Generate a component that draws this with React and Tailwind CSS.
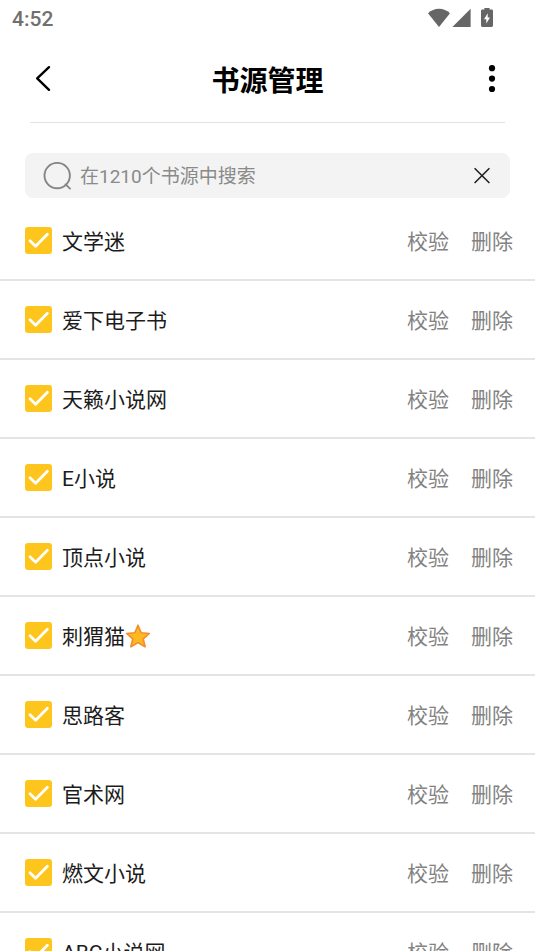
import React, { useState } from 'react';

const SOURCES = [
  { name: '文学迷' },
  { name: '爱下电子书' },
  { name: '天籁小说网' },
  { name: 'E小说' },
  { name: '顶点小说' },
  { name: '刺猬猫', starred: true },
  { name: '思路客' },
  { name: '官术网' },
  { name: '燃文小说' },
  { name: 'ABC小说网' },
];

const StatusBar = () => (
  <div className="flex h-9 shrink-0 items-center justify-between pl-3 pr-[42px] text-[#707070]">
    <span className="pt-0.5 text-[21px] font-medium leading-6">4:52</span>
    <div className="flex items-center text-[#666666]">
      <svg className="h-5 w-[22px]" viewBox="0 0 22 20" fill="currentColor" aria-hidden="true">
        <path d="M0 5.2C3 2.4 6.8.8 11 .8s8 1.6 11 4.4L11 19z" />
      </svg>
      <svg className="ml-0.5 h-5 w-[19px]" viewBox="0 0 19 20" fill="currentColor" aria-hidden="true">
        <path d="M18.6.8V19H.4z" />
      </svg>
      <svg className="ml-2.5 h-5 w-3" viewBox="0 0 12 20" fill="currentColor" aria-hidden="true">
        <path
          fillRule="evenodd"
          d="M3.4 1.4V.2c0-.3.3-.6.6-.6h4c.3 0 .6.3.6.6v1.2h2c.8 0 1.4.6 1.4 1.4v14.8c0 .8-.6 1.4-1.4 1.4H1.4C.6 19 0 18.4 0 17.6V2.8c0-.8.6-1.4 1.4-1.4zM6.7 5.2 3 11.2h2.3v4.2L9 9.4H6.7z"
        />
      </svg>
    </div>
  </div>
);

const Header = () => (
  <header className="mx-[30px] flex h-[87px] shrink-0 items-center justify-between border-b border-[#e2e2e2]">
    <button type="button" aria-label="返回" className="flex w-7 justify-start">
      <svg
        className="h-7 w-7"
        viewBox="0 0 28 28"
        fill="none"
        stroke="#000"
        strokeWidth="2.4"
        strokeLinecap="round"
        strokeLinejoin="round"
        aria-hidden="true"
      >
        <path d="M19 2.2 7.2 13.4 19 24.8" />
      </svg>
    </button>
    <h1 className="pt-1.5 text-[28px] font-bold leading-9 text-black">书源管理</h1>
    <button type="button" aria-label="更多" className="flex w-7 justify-end">
      <svg className="h-7 w-7" viewBox="0 0 28 28" fill="#000" aria-hidden="true">
        <circle cx="15" cy="3.2" r="3.1" />
        <circle cx="15" cy="13.6" r="3.1" />
        <circle cx="15" cy="24" r="3.1" />
      </svg>
    </button>
  </header>
);

const SearchBar = ({ value, onChange }) => (
  <div className="mx-[25px] mb-1 mt-[30px] flex h-[45px] shrink-0 items-center rounded-lg bg-[#f3f3f3] px-[18px]">
    <svg
      className="h-7 w-7 shrink-0"
      viewBox="0 0 28 28"
      fill="none"
      stroke="#858585"
      strokeWidth="1.9"
      strokeLinecap="round"
      aria-hidden="true"
    >
      <circle cx="14.2" cy="13.6" r="12.7" />
      <path d="m22.6 22.4 4.4 4.2" />
    </svg>
    <input
      type="text"
      aria-label="搜索书源"
      placeholder="在1210个书源中搜索"
      value={value}
      onChange={(e) => onChange(e.target.value)}
      className="ml-[9px] min-w-0 flex-1 bg-transparent pt-0.5 text-[19px] leading-7 text-[#222222] outline-none placeholder:text-[#8a8a8a]"
    />
    <button type="button" aria-label="清除" onClick={() => onChange('')} className="shrink-0">
      <svg className="h-5 w-5" viewBox="0 0 20 20" fill="none" stroke="#222" strokeWidth="1.6" aria-hidden="true">
        <path d="m2.6 2.2 14.8 14.8M17.4 2.2 2.6 17" />
      </svg>
    </button>
  </div>
);

const Star = () => (
  <svg className="h-[26px] w-[26px]" viewBox="0 0 26 26" role="img" aria-label="星标">
    <path
      d="M13 2.2 16.2 9.8l8.2.7-6.2 5.3 1.9 8-7.1-4.2-7.1 4.2 1.9-8-6.2-5.3 8.2-.7z"
      fill="#fdb822"
      stroke="#f28c2c"
      strokeWidth="1.6"
      strokeLinejoin="round"
    />
  </svg>
);

const SourceRow = ({ source, checked, onToggle }) => (
  <li className="flex h-[79px] items-center border-b-2 border-[#e4e4e4] pl-[25px] pr-[22px] text-[21px] leading-7">
    <label className="flex min-w-0 flex-1 items-center">
      <span className="grid shrink-0">
        <input
          type="checkbox"
          checked={checked}
          onChange={onToggle}
          className="peer col-start-1 row-start-1 h-[27px] w-[27px] appearance-none rounded-[3px] border-2 border-[#cccccc] checked:border-[#fec51c] checked:bg-[#fec51c]"
        />
        <svg
          className="pointer-events-none invisible col-start-1 row-start-1 h-[27px] w-[27px] peer-checked:visible"
          viewBox="0 0 27 27"
          fill="none"
          stroke="#fff"
          strokeWidth="2.8"
          strokeLinecap="round"
          strokeLinejoin="round"
          aria-hidden="true"
        >
          <path d="m5 13.8 5.6 5.4L22.4 7.2" />
        </svg>
      </span>
      <span className="ml-2.5 truncate pt-0.5 text-[#1c1c1c]">{source.name}</span>
      {source.starred && <Star />}
    </label>
    <div className="flex shrink-0 gap-[22px] pt-0.5 text-[#828282]">
      <button type="button">校验</button>
      <button type="button">删除</button>
    </div>
  </li>
);

const App = () => {
  const [query, setQuery] = useState('');
  const [disabled, setDisabled] = useState([]);

  const toggle = (name) =>
    setDisabled((prev) => (prev.includes(name) ? prev.filter((n) => n !== name) : [...prev, name]));

  return (
    <div className="flex h-screen flex-col overflow-hidden bg-white font-[Roboto,'Noto_Sans_CJK_SC',sans-serif]">
      <StatusBar />
      <Header />
      <SearchBar value={query} onChange={setQuery} />

      {/* Lista rolável das fontes */}
      <ul className="min-h-0 flex-1 overflow-y-auto [scrollbar-width:none]">
        {SOURCES.filter((s) => s.name.includes(query)).map((source) => (
          <SourceRow
            key={source.name}
            source={source}
            checked={!disabled.includes(source.name)}
            onToggle={() => toggle(source.name)}
          />
        ))}
      </ul>
    </div>
  );
};

export default App;
